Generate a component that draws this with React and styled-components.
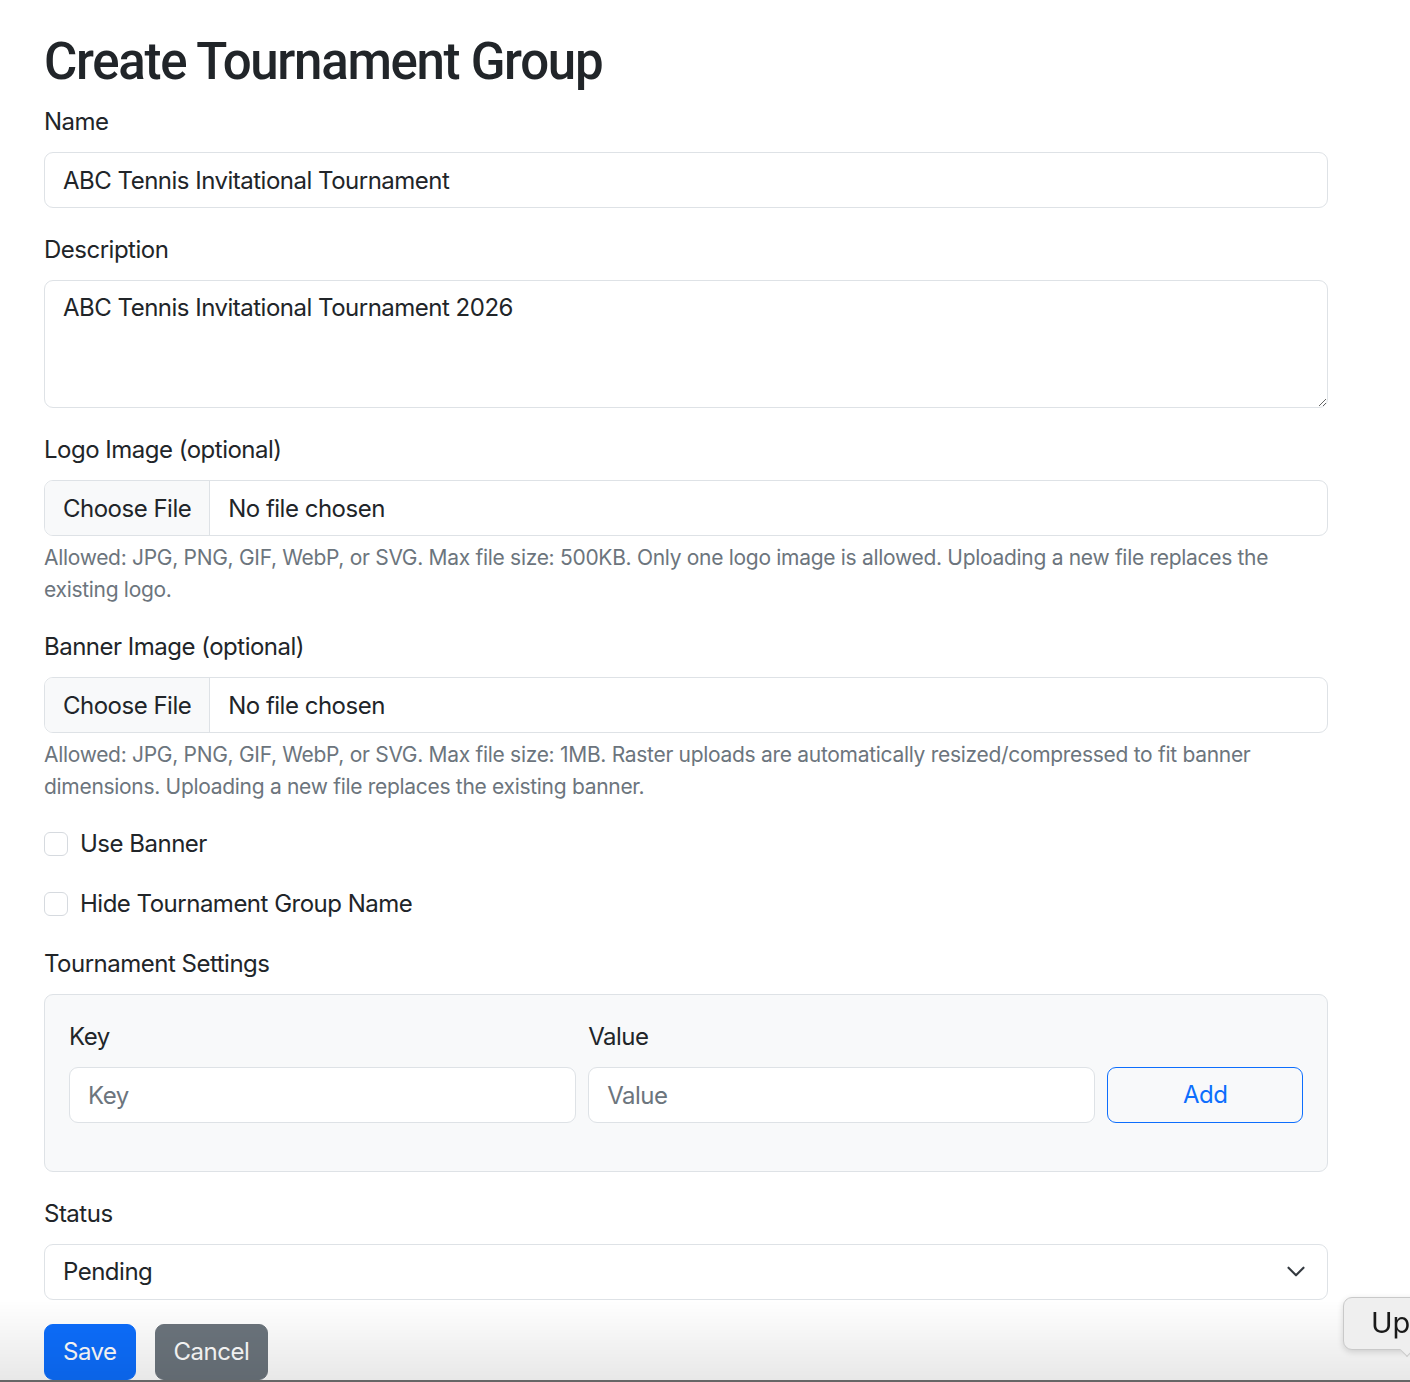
import styled, { createGlobalStyle } from "styled-components";

const GlobalStyle = createGlobalStyle`
  html, body {
    margin: 0;
    padding: 0;
    overflow: hidden;
    background: #fff;
  }
  body {
    font-family: Inter, "Noto Sans", "Liberation Sans", sans-serif;
    font-size: 24px;
    line-height: 1.5;
    letter-spacing: -0.5px;
    color: #212529;
  }
  *, *::before, *::after {
    box-sizing: border-box;
  }
`;

const Page = styled.div`
  padding: 26px 82px 0 44px;
`;

const Title = styled.h1`
  margin: 0 0 6px;
  font-family: Roboto, Inter, sans-serif;
  font-size: 51px;
  font-weight: 500;
  line-height: 72px;
  letter-spacing: -1.3px;
`;

const Field = styled.div`
  margin-bottom: 24px;
`;

const Label = styled.label`
  display: block;
  margin-bottom: 12px;
`;

const controlBase = `
  display: block;
  width: 100%;
  padding: 9px 18px;
  font: inherit;
  letter-spacing: inherit;
  color: #212529;
  background: #fff;
  border: 1px solid #dee2e6;
  border-radius: 9px;
  outline: none;
`;

const Input = styled.input`
  ${controlBase}
  height: 56px;

  &::placeholder {
    color: #6c757d;
  }
`;

const TextArea = styled.textarea`
  ${controlBase}
  height: 128px;
  resize: vertical;
`;

const FileInput = styled.input`
  ${controlBase}
  height: 56px;
  overflow: hidden;

  &::file-selector-button {
    font: inherit;
    letter-spacing: inherit;
    color: #212529;
    background: #f8f9fa;
    border: 0;
    border-right: 1px solid #dee2e6;
    border-radius: 0;
    padding: 9px 18px;
    margin: -9px 18px -9px -18px;
    height: 56px;
  }
`;

const HelpText = styled.div`
  margin-top: 6px;
  font-size: 21px;
  line-height: 31.5px;
  letter-spacing: -0.3px;
  color: #6c757d;
`;

const Check = styled.label`
  display: flex;
  align-items: center;
  gap: 12px;
  min-height: 36px;
  margin-bottom: 24px;
`;

const CheckBox = styled.input`
  appearance: none;
  width: 24px;
  height: 24px;
  margin: 0;
  background: #fff;
  border: 1px solid #d6dadf;
  border-radius: 6px;
  flex-shrink: 0;
`;

const SettingsBox = styled.div`
  padding: 24px 24px 0;
  background: #f8f9fa;
  border: 1px solid #dee2e6;
  border-radius: 9px;
`;

const SettingsRow = styled.div`
  display: grid;
  grid-template-columns:
    calc((100% + 12px) * 5 / 12 - 12px)
    calc((100% + 12px) * 5 / 12 - 12px)
    1fr;
  gap: 12px;
  align-items: end;
  margin-bottom: 48px;
`;

const OutlineButton = styled.button`
  width: 100%;
  height: 56px;
  font: inherit;
  letter-spacing: inherit;
  color: #0d6efd;
  background: transparent;
  border: 1px solid #0d6efd;
  border-radius: 9px;
  cursor: pointer;
`;

const SelectWrap = styled.div`
  position: relative;
`;

const Select = styled.select`
  ${controlBase}
  height: 56px;
  padding-right: 54px;
  appearance: none;
`;

const Chevron = styled.svg`
  position: absolute;
  right: 22px;
  top: 20px;
  pointer-events: none;
`;

const Actions = styled.div`
  display: flex;
  gap: 19px;
`;

const Button = styled.button`
  height: 56px;
  padding: 9px 18px;
  font: inherit;
  letter-spacing: inherit;
  color: #fff;
  background: ${(p) => (p.$variant === "secondary" ? "#6c757d" : "#0d6efd")};
  border: 1px solid ${(p) => (p.$variant === "secondary" ? "#6c757d" : "#0d6efd")};
  border-radius: 9px;
  cursor: pointer;
`;

const BottomShade = styled.div`
  position: fixed;
  left: 0;
  right: 0;
  bottom: 0;
  height: 82px;
  background: linear-gradient(rgba(0, 0, 0, 0), rgba(0, 0, 0, 0.09));
  border-bottom: 2px solid #666;
  pointer-events: none;
`;

const Tooltip = styled.div`
  position: fixed;
  left: 1343px;
  top: 1297px;
  width: 140px;
  height: 53px;
  padding: 5px 0 0 27px;
  font-size: 29px;
  line-height: 40px;
  letter-spacing: 0;
  white-space: nowrap;
  color: #1a1a1a;
  background: #efefef;
  border: 1px solid #c9c9c9;
  border-radius: 9px;
  box-shadow: 0 2px 6px rgba(0, 0, 0, 0.15);

  &::after {
    content: "";
    position: absolute;
    left: 58px;
    bottom: -6px;
    width: 10px;
    height: 10px;
    background: #efefef;
    border-right: 1px solid #c9c9c9;
    border-bottom: 1px solid #c9c9c9;
    transform: rotate(45deg);
  }
`;

export default function App() {
  return (
    <>
      <GlobalStyle />
      <Page>
        <Title>Create Tournament Group</Title>

        <Field>
          <Label htmlFor="name">Name</Label>
          <Input id="name" defaultValue="ABC Tennis Invitational Tournament" />
        </Field>

        <Field>
          <Label htmlFor="description">Description</Label>
          <TextArea
            id="description"
            rows={3}
            defaultValue="ABC Tennis Invitational Tournament 2026"
          />
        </Field>

        <Field>
          <Label htmlFor="logo">Logo Image (optional)</Label>
          <FileInput id="logo" type="file" />
          <HelpText>
            Allowed: JPG, PNG, GIF, WebP, or SVG. Max file size: 500KB. Only one
            logo image is allowed. Uploading a new file replaces the existing
            logo.
          </HelpText>
        </Field>

        <Field>
          <Label htmlFor="banner">Banner Image (optional)</Label>
          <FileInput id="banner" type="file" />
          <HelpText>
            Allowed: JPG, PNG, GIF, WebP, or SVG. Max file size: 1MB. Raster
            uploads are automatically resized/compressed to fit banner
            dimensions. Uploading a new file replaces the existing banner.
          </HelpText>
        </Field>

        <Check>
          <CheckBox type="checkbox" />
          Use Banner
        </Check>

        <Check>
          <CheckBox type="checkbox" />
          Hide Tournament Group Name
        </Check>

        <Field>
          <Label>Tournament Settings</Label>
          <SettingsBox>
            <SettingsRow>
              <div>
                <Label htmlFor="key">Key</Label>
                <Input id="key" placeholder="Key" />
              </div>
              <div>
                <Label htmlFor="value">Value</Label>
                <Input id="value" placeholder="Value" />
              </div>
              <OutlineButton type="button">Add</OutlineButton>
            </SettingsRow>
          </SettingsBox>
        </Field>

        <Field>
          <Label htmlFor="status">Status</Label>
          <SelectWrap>
            <Select id="status" defaultValue="pending">
              <option value="pending">Pending</option>
              <option value="active">Active</option>
              <option value="completed">Completed</option>
            </Select>
            <Chevron width="20" height="15" viewBox="0 0 16 12" fill="none">
              <path
                d="M2 3l6 6 6-6"
                stroke="#343a40"
                strokeWidth="1.7"
                strokeLinecap="round"
                strokeLinejoin="round"
              />
            </Chevron>
          </SelectWrap>
        </Field>

        <Actions>
          <Button type="submit">Save</Button>
          <Button type="button" $variant="secondary">
            Cancel
          </Button>
        </Actions>
      </Page>
      <BottomShade />
      <Tooltip>Upwards</Tooltip>
    </>
  );
}
